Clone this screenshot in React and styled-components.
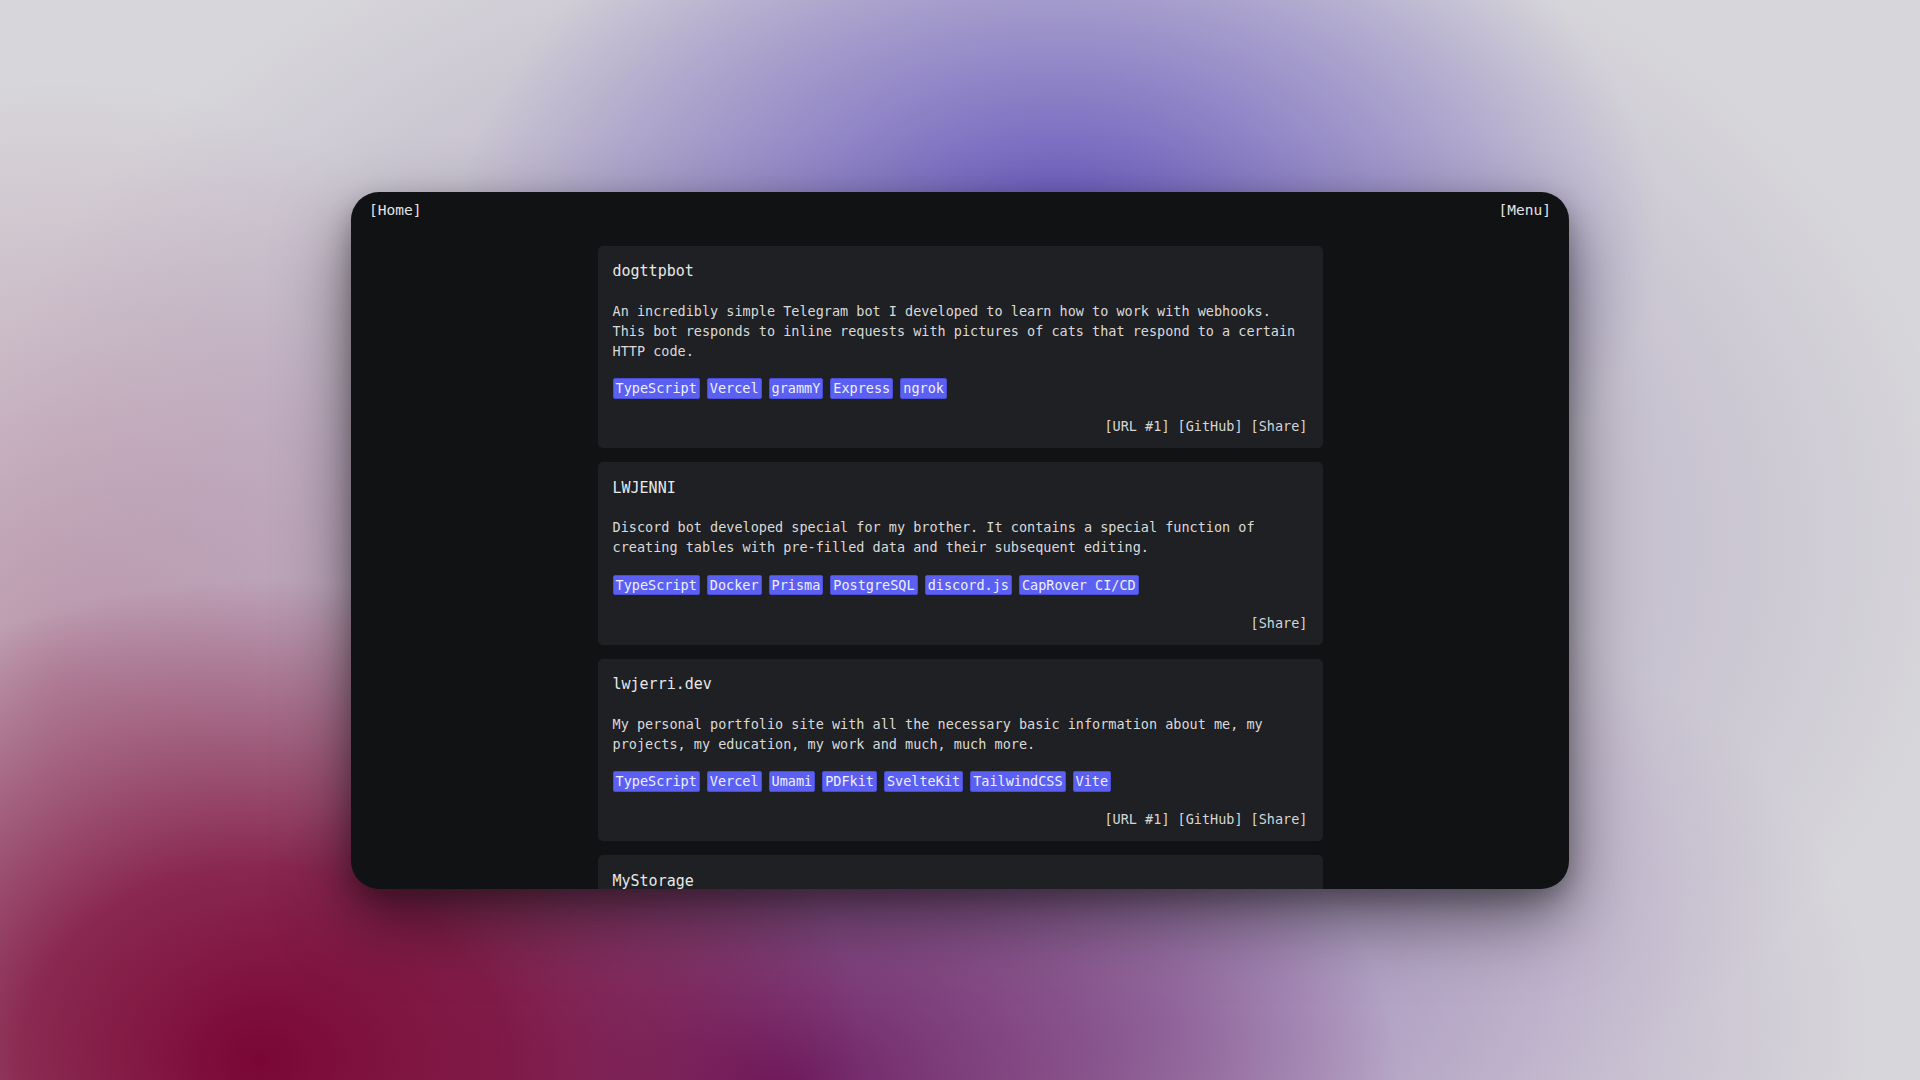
import React from "react";
import styled, { createGlobalStyle } from "styled-components";

const projects = [
    {
        title: "dogttpbot",
        description: "An incredibly simple Telegram bot I developed to learn how to work with webhooks. This bot responds to inline requests with pictures of cats that respond to a certain HTTP code.",
        tags: ["TypeScript", "Vercel", "grammY", "Express", "ngrok"],
        links: ["URL #1", "GitHub", "Share"],
    },
    {
        title: "LWJENNI",
        description: "Discord bot developed special for my brother. It contains a special function of creating tables with pre-filled data and their subsequent editing.",
        tags: ["TypeScript", "Docker", "Prisma", "PostgreSQL", "discord.js", "CapRover CI/CD"],
        links: ["Share"],
    },
    {
        title: "lwjerri.dev",
        description: "My personal portfolio site with all the necessary basic information about me, my projects, my education, my work and much, much more.",
        tags: ["TypeScript", "Vercel", "Umami", "PDFkit", "SvelteKit", "TailwindCSS", "Vite"],
        links: ["URL #1", "GitHub", "Share"],
    },
    {
        title: "MyStorage",
        description: "A small self-hosted file storage.",
        tags: ["TypeScript", "Docker"],
        links: ["Share"],
    },
];

function App() {
    return (
        <>
            <GlobalStyle />
            <Stage>
                <Window>
                    <Header>
                        <NavLink href="#">[Home]</NavLink>
                        <NavLink href="#">[Menu]</NavLink>
                    </Header>
                    <Feed>
                        {projects.map((project) => (
                            <Card key={project.title}>
                                <Title>{project.title}</Title>
                                <Description>{project.description}</Description>
                                <Tags>
                                    {project.tags.map((tag) => (
                                        <Tag key={tag}>{tag}</Tag>
                                    ))}
                                </Tags>
                                <Links>
                                    {project.links.map((link) => (
                                        <LinkItem key={link} href="#">[{link}]</LinkItem>
                                    ))}
                                </Links>
                            </Card>
                        ))}
                    </Feed>
                </Window>
            </Stage>
        </>
    );
}

const GlobalStyle = createGlobalStyle`
    html, body {
        margin: 0;
        height: 100%;
        overflow: hidden;
    }
    body {
        font-family: "DejaVu Sans Mono", "Liberation Mono", monospace;
        background-color: #d7d6da;
        background-image:
            radial-gradient(ellipse 600px 400px at 1060px 230px, rgba(104, 88, 190, 1) 0%, rgba(118, 104, 196, 0.6) 45%, rgba(150, 140, 205, 0) 100%),
            radial-gradient(ellipse 600px 480px at 260px 1060px, rgba(122, 6, 52, 1) 0%, rgba(122, 6, 52, 0.8) 40%, rgba(122, 6, 52, 0) 100%),
            radial-gradient(ellipse 620px 420px at 780px 1090px, rgba(108, 28, 98, 1) 0%, rgba(108, 28, 98, 0.55) 50%, rgba(108, 28, 98, 0) 100%),
            radial-gradient(ellipse 720px 480px at 1150px 1020px, rgba(150, 120, 180, 0.7) 0%, rgba(150, 120, 180, 0) 100%),
            radial-gradient(ellipse 560px 600px at 60px 680px, rgba(165, 100, 135, 0.55) 0%, rgba(165, 100, 135, 0) 100%),
            radial-gradient(ellipse 1000px 700px at 960px 540px, rgba(110, 80, 150, 0.5) 0%, rgba(110, 80, 150, 0) 100%);
    }
`

const Stage = styled.div`
    height: 100vh;
    display: flex;
    align-items: center;
    justify-content: center;
`

const Window = styled.div`
    width: 1218px;
    height: 697px;
    border-radius: 28px;
    background: #111214;
    overflow: hidden;
    display: flex;
    flex-direction: column;
    box-shadow: 0 30px 70px rgba(0, 0, 0, 0.5), 0 10px 25px rgba(0, 0, 0, 0.25);
`

const Header = styled.header`
    display: flex;
    justify-content: space-between;
    padding: 8px 18px 0;
    font-size: 14.5px;
    line-height: 20px;
`

const NavLink = styled.a`
    color: #e4e4e4;
    text-decoration: none;
`

const Feed = styled.main`
    flex: 1;
    overflow: hidden;
    padding-top: 26px;
    display: flex;
    flex-direction: column;
    align-items: center;
    gap: 14px;
`

const Card = styled.article`
    width: 725px;
    box-sizing: border-box;
    flex-shrink: 0;
    background: #1e2023;
    border-radius: 5px;
    padding: 14.5px 15px 12px;
`

const Title = styled.h2`
    margin: 0 0 18.5px;
    font-size: 15px;
    line-height: 22px;
    font-weight: normal;
    color: #e8e8e8;
`

const Description = styled.p`
    margin: 0 0 17.5px;
    font-size: 13.5px;
    line-height: 20px;
    color: #dadada;
`

const Tags = styled.div`
    display: flex;
    flex-wrap: wrap;
    gap: 7px;
    margin-bottom: 17.5px;
`

const Tag = styled.span`
    background: #5b5ff2;
    border: 1px solid #4a4ed6;
    border-radius: 2px;
    padding: 0 2px;
    font-size: 13.5px;
    line-height: 18.5px;
    color: #eef0ff;
`

const Links = styled.div`
    display: flex;
    justify-content: flex-end;
    gap: 8px;
    font-size: 13.5px;
    line-height: 20px;
`

const LinkItem = styled.a`
    color: #d4d6d8;
    text-decoration: none;
`

export default App
